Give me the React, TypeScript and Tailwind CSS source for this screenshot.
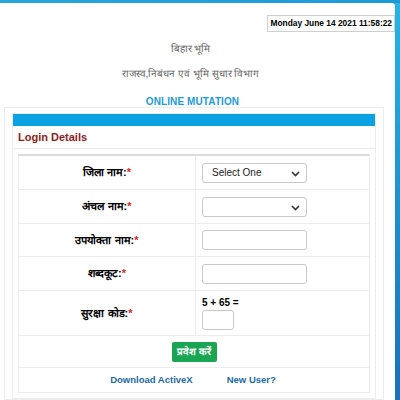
const rows = [
    { label: 'जिला नाम:', star: '*', kind: 'select1', h: 'h-[34px]' },
    { label: 'अंचल नाम: ', star: '*', kind: 'select2', h: 'h-[34px]' },
    { label: 'उपयोक्ता नाम:', star: '*', kind: 'input', h: 'h-[33px]' },
    { label: 'शब्दकूट:', star: '*', kind: 'input', h: 'h-[34px]' },
];

const Chevron = () => (
    <svg width="9" height="6" viewBox="0 0 9 6" className="absolute right-[6px] top-[7px]">
        <path d="M1 1l3.5 3.5L8 1" fill="none" stroke="#333" strokeWidth="1.6" />
    </svg>
);

const App = () => {
    return (
        <div className="w-[400px] h-[400px] overflow-hidden flex flex-col bg-[#1e8fd6] font-['Liberation_Sans',Arial,sans-serif]">
            <div className="h-[3px] bg-gradient-to-r from-[#2aa4dc] to-[#1c9ad8]" />
            <div className="flex flex-1">
                <div className="flex-1 bg-white rounded-tr-[3px] flex flex-col">
                    <div className="flex justify-end pt-[12px]">
                        <div className="border border-[#cfcfcf] h-[17px] px-[2px] flex items-center text-[8.4px] font-bold text-black">
                            Monday June 14 2021 11:58:22
                        </div>
                    </div>
                    <div className="text-center text-[10px] text-[#666] mt-[10px] leading-[13px] pr-[14px]">बिहार भूमि</div>
                    <div className="text-center text-[10px] text-[#666] mt-[12px] leading-[13px] pr-[14px]">राजस्व,निबंधन एवं भूमि सुधार विभाग</div>
                    <div className="text-center text-[10px] font-bold text-[#1f9bd8] mt-[15px] leading-[13px] pr-[10px] tracking-[0.1px]">ONLINE MUTATION</div>
                    <div className="ml-[4px] mr-[11px] -mt-[1px] border border-[#ececec] px-[7px] pt-[5px] flex-1">
                        <div className="border border-[#ececec] h-full">
                            <div className="h-[12px] bg-[#0aa2e2]" />
                            <div className="h-[23px] flex items-center pl-[5px] text-[11px] font-bold text-[#8a1c1c] border-b border-[#ececec]">
                                Login Details
                            </div>
                            <div className="mx-[5px] mt-[5px] border-t-2 border-[#dcdcdc] border-x border-b border-x-[#ececec] border-b-[#ececec]">
                                {rows.map((r, i) => (
                                    <div key={i} className={`flex ${r.h} border-b border-[#ececec]`}>
                                        <div className="w-[177px] border-r border-[#ececec] flex items-center justify-center text-[11px] font-bold text-black">
                                            {r.label}<span className="text-[#d22]">{r.star}</span>
                                        </div>
                                        <div className="flex-1 flex items-center pl-[6px]">
                                            {r.kind === 'input' ? (
                                                <div className="w-[105px] h-[20px] border border-[#c8c8c8] rounded-[3px] bg-white" />
                                            ) : (
                                                <div className="relative w-[105px] h-[20px] border border-[#c8c8c8] rounded-[3px] bg-white flex items-center pl-[9px] text-[10px] text-[#222]">
                                                    {r.kind === 'select1' ? 'Select One' : ''}
                                                    <Chevron />
                                                </div>
                                            )}
                                        </div>
                                    </div>
                                ))}
                                <div className="flex h-[45px] border-b border-[#ececec]">
                                    <div className="w-[177px] border-r border-[#ececec] flex items-center justify-center text-[11px] font-bold text-black">
                                        सुरक्षा कोड:<span className="text-[#d22]">*</span>
                                    </div>
                                    <div className="flex-1 flex flex-col justify-center pl-[6px]">
                                        <div className="text-[10px] font-bold text-black leading-[12px]">5 + 65 =</div>
                                        <div className="w-[32px] h-[20px] border border-[#c8c8c8] rounded-[3px] mt-[1px]" />
                                    </div>
                                </div>
                                <div className="h-[32px] flex items-center justify-center border-b border-[#ececec]">
                                    <button className="h-[20px] w-[45px] bg-[#1aa553] rounded-[2px] text-white text-[10px] font-bold">
                                        प्रवेश करें
                                    </button>
                                </div>
                                <div className="h-[24px] flex items-center justify-center gap-[34px] text-[9.5px] font-bold text-[#1d6aa5] pr-[2px]">
                                    <span>Download ActiveX</span>
                                    <span>New User?</span>
                                </div>
                            </div>
                        </div>
                    </div>
                </div>
                <div className="w-[5px] bg-gradient-to-b from-[#25b4e6] to-[#1a6fb8]" />
            </div>
        </div>
    );
};

export default App;
